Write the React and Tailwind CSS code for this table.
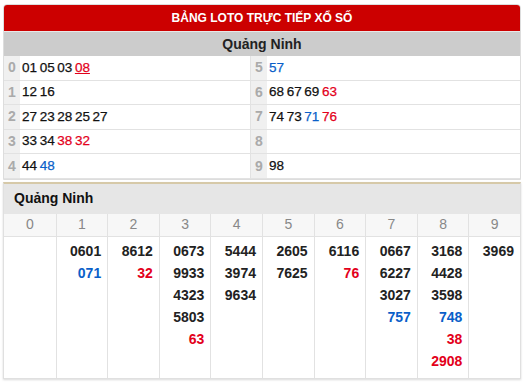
const loto = [
  [['01'], ['05'], ['03'], ['08', 'u']],
  [['12'], ['16']],
  [['27'], ['23'], ['28'], ['25'], ['27']],
  [['33'], ['34'], ['38', 'r'], ['32', 'r']],
  [['44'], ['48', 'b']],
  [['57', 'b']],
  [['68'], ['67'], ['69'], ['63', 'r']],
  [['74'], ['73'], ['71', 'b'], ['76', 'r']],
  [],
  [['98']],
]

const heads = [
  [],
  [['0601'], ['071', 'b']],
  [['8612'], ['32', 'r']],
  [['0673'], ['9933'], ['4323'], ['5803'], ['63', 'r']],
  [['5444'], ['3974'], ['9634']],
  [['2605'], ['7625']],
  [['6116'], ['76', 'r']],
  [['0667'], ['6227'], ['3027'], ['757', 'b']],
  [['3168'], ['4428'], ['3598'], ['748', 'b'], ['38', 'r'], ['2908', 'r']],
  [['3969']],
]

const tone = {
  r: 'text-[#e3001b]',
  u: 'text-[#e3001b] underline',
  b: 'text-[#0a5fc9]',
}

function Half({ d }) {
  return (
    <div className="flex h-full">
      <div className="w-[16px] flex items-center justify-center bg-[#f0f0f0] text-[#aaa] font-bold text-[14px]">{d}</div>
      <div className="flex-1 flex items-center gap-[2.6px] pl-[2px] text-[13.5px] text-[#111] [-webkit-text-stroke:0.25px]">
        {loto[d].map(([n, c], i) => (
          <span key={i} className={tone[c] || ''}>{n}</span>
        ))}
      </div>
    </div>
  )
}

export default function App() {
  return (
    <div className="bg-white w-[524px] h-[383px] px-[3px] pt-[4px] font-['Liberation_Sans',Arial,sans-serif]">
      <div className="border border-[#ddd] rounded-t-[4px] overflow-hidden">
        <div className="h-[26px] bg-[#cc0000] text-white font-bold text-[12px] flex items-center justify-center">
          BẢNG LOTO TRỰC TIẾP XỔ SỐ
        </div>
        <div className="h-[25px] bg-[#cccccc] border-t border-[#e8e8e8] text-[#222] font-bold text-[14px] flex items-center justify-center">
          Quảng Ninh
        </div>
        {[0, 1, 2, 3, 4].map(r => (
          <div key={r} className="grid grid-cols-[246px_1fr] h-[24.6px] border-b border-[#e2e2e2]">
            <Half d={r} />
            <div className="border-l border-[#e2e2e2]">
              <Half d={r + 5} />
            </div>
          </div>
        ))}
      </div>

      <div className="mt-[2px] border border-[#e0e0e0] border-t-[#d6c9a8] border-t-2 shadow-[0_1px_2px_rgba(0,0,0,0.15)]">
        <div className="h-[30px] bg-[#e6e6e6] flex items-center pl-[10px] font-bold text-[14px] text-[#111]">
          Quảng Ninh
        </div>
        <div className="grid grid-cols-10 h-[23px] bg-[#f7f7f7] border-b border-[#e2e2e2]">
          {heads.map((_, i) => (
            <div key={i} className={`flex items-center justify-center text-[14px] text-[#888] ${i ? 'border-l border-[#e2e2e2]' : ''}`}>{i}</div>
          ))}
        </div>
        <div className="grid grid-cols-10 h-[141px]">
          {heads.map((col, i) => (
            <div key={i} className={`flex flex-col items-end pt-[3px] pr-[6px] font-bold text-[14px] leading-[22px] text-[#222] ${i ? 'border-l border-[#e2e2e2]' : ''}`}>
              {col.map(([n, c], j) => (
                <span key={j} className={tone[c] || ''}>{n}</span>
              ))}
            </div>
          ))}
        </div>
      </div>
    </div>
  )
}
